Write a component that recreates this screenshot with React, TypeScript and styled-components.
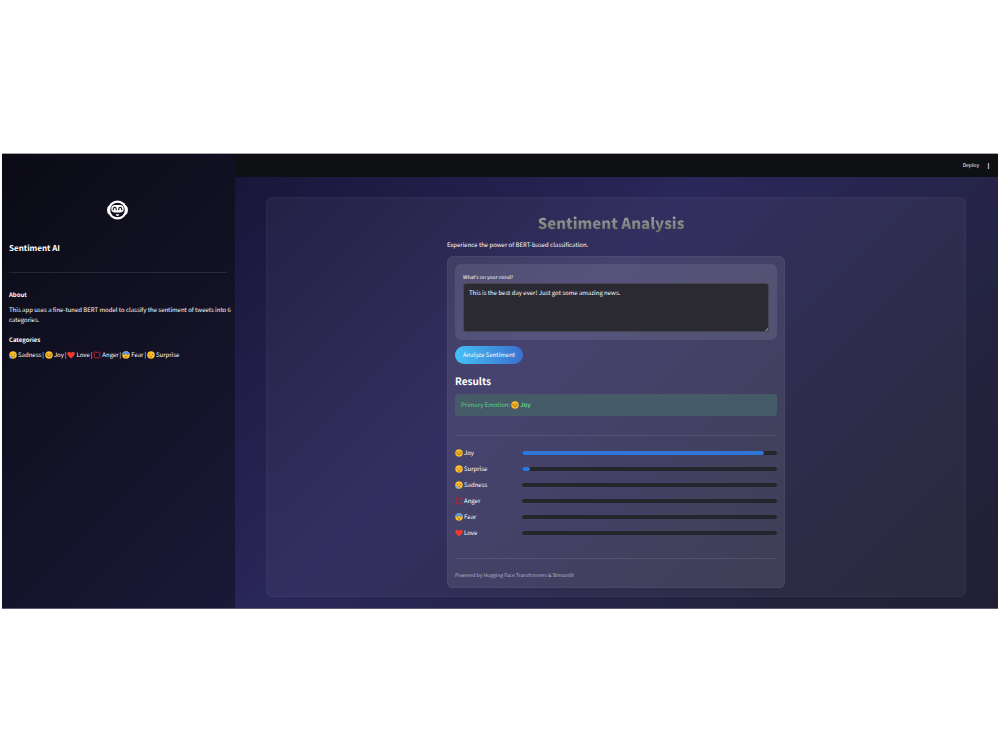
import React from 'react';
import styled, { createGlobalStyle } from 'styled-components';

const GlobalStyle = createGlobalStyle`
  * { box-sizing: border-box; }
  body {
    margin: 0;
    background: #fff;
    color: #fff;
    font-family: "Noto Sans CJK JP", "Noto Sans", sans-serif;
    font-size: 6px;
    line-height: 10px;
    font-weight: 400;
    text-rendering: geometricPrecision;
  }
  h1, h2, h3, p, hr { margin: 0; }
  button, textarea { text-rendering: inherit; }
`;

const Page = styled.div`
  min-height: 100vh;
  padding: 153px 2px 0;
`;

const Shell = styled.div`
  display: flex;
  border-top: 1px solid #a5a5ab;
  border-bottom: 1px solid #5c5a70;
  background: linear-gradient(135deg, #0f0d28, #2a275a 50%, #232340 80%, #212033);
`;

const Sidebar = styled.aside`
  flex: 0 0 233px;
  padding: 46px 8px 0 7px;
  background: linear-gradient(135deg, #0b0b16, #131225 50%, #1b1838);
`;

const LogoRow = styled.div`
  display: flex;
  justify-content: center;
  height: 20px;
  margin: 0 2px 22px 0;
`;

const SidebarTitle = styled.h2`
  font-size: 8px;
  line-height: 14px;
  font-weight: 700;
`;

const SidebarHeading = styled.h3`
  font-size: 6px;
  line-height: 10px;
  font-weight: 700;
  margin-bottom: 5px;
`;

const SidebarText = styled.p`
  margin: 0 -6px 10px 0;
`;

const Rule = styled.hr<{ $before: number; $after: number }>`
  border: 0;
  height: 1px;
  background: rgba(255, 255, 255, 0.1);
  margin: ${p => p.$before}px 0 ${p => p.$after}px;
`;

const Categories = styled.p`
  display: flex;
  align-items: center;
  gap: 1px;
`;

const Main = styled.main`
  flex: 1;
  min-width: 0;
`;

const TopBar = styled.header`
  display: flex;
  justify-content: flex-end;
  align-items: center;
  gap: 7px;
  height: 23px;
  padding-right: 7px;
  background: #0f1014;
`;

const BarButton = styled.button`
  display: flex;
  padding: 0;
  border: 0;
  background: none;
  color: inherit;
  font: inherit;
  font-size: 5px;
`;

const Panel = styled.section`
  margin: 20px 32px 11px 31px;
  padding: 16px 16px 8px;
  border: 1px solid rgba(255, 255, 255, 0.04);
  border-radius: 7px;
  background: rgba(255, 255, 255, 0.045);
`;

const Column = styled.div`
  max-width: 338px;
  margin: 0 auto;
`;

const Title = styled.h1`
  padding-right: 10px;
  font-size: 15px;
  line-height: 20px;
  font-weight: 900;
  text-align: center;
  color: transparent;
  background: linear-gradient(#a8a8a4, #666664);
  background-clip: text;
  -webkit-background-clip: text;
`;

const Subtitle = styled.p`
  margin: 6px 0;
`;

const Card = styled.div`
  padding: 7px 7px 6px;
  border: 1px solid rgba(255, 255, 255, 0.04);
  border-radius: 6px;
  background: rgba(255, 255, 255, 0.095);
`;

const InputBox = styled.div`
  padding: 8px;
  border-radius: 6px;
  background: rgba(255, 255, 255, 0.09);
`;

const Label = styled.label`
  display: block;
  padding-top: 1px;
  font-size: 5px;
`;

const TextArea = styled.textarea`
  display: block;
  width: 100%;
  height: 49px;
  padding: 4px 5px;
  border: 1px solid #45444f;
  border-radius: 3px;
  background: linear-gradient(135deg, transparent 50%, #77777f 50%) right bottom / 3px 3px no-repeat #2b2a33;
  color: inherit;
  font: inherit;
  resize: none;
  outline: 0;
`;

const AnalyzeButton = styled.button`
  display: block;
  height: 18px;
  margin: 6px 0 10px;
  padding: 0 8px;
  border: 0;
  border-radius: 9px;
  background: linear-gradient(90deg, #45c0f5, #3a70d0);
  color: #fff;
  font: inherit;
`;

const ResultsTitle = styled.h2`
  font-size: 10px;
  line-height: 14px;
  font-weight: 700;
`;

const Alert = styled.div`
  display: flex;
  align-items: center;
  gap: 1px;
  height: 22px;
  margin-top: 6px;
  padding: 0 6px;
  border-radius: 3px;
  background: #455b68;
  color: #5fd38a;
`;

const ScoreRow = styled.div`
  display: flex;
  align-items: center;
  height: 16px;
`;

const ScoreName = styled.div`
  display: flex;
  align-items: center;
  gap: 1px;
  flex: 0 0 67px;
`;

const Track = styled.div`
  flex: 1;
  height: 4px;
  border-radius: 2px;
  background: #25252d;
  overflow: hidden;
`;

const Fill = styled.div`
  height: 100%;
  border-radius: 2px;
  background: #2f76d8;
`;

const Footer = styled.p`
  font-size: 5px;
  font-weight: 400;
  color: #b8b6c6;
`;

type Mood = 'sadness' | 'joy' | 'love' | 'anger' | 'fear' | 'surprise';

const Emoji = ({ mood }: { mood: Mood }) => {
  if (mood === 'love') {
    return (
      <svg width="8" height="8" viewBox="0 0 16 16" aria-hidden="true">
        <path d="M8 15C3 11 .5 8.500.5 5.200.5 1 5.800 0 8 3.800 10.200 0 15.500 1 15.500 5.200 15.500 8.500 13 11 8 15Z" fill="#f03a2e" />
      </svg>
    );
  }
  if (mood === 'anger') {
    return (
      <svg width="8" height="8" viewBox="0 0 16 16" aria-hidden="true" fill="none" stroke="#c4202a" strokeWidth="1.700">
        <path d="M2 6V4Q2 2 4 2H6L8 3.500 10 2H12Q14 2 14 4V6L12.500 8 14 10V12Q14 14 12 14H10L8 12.500 6 14H4Q2 14 2 12V10L3.500 8Z" />
      </svg>
    );
  }
  return (
    <svg width="8" height="8" viewBox="0 0 16 16" aria-hidden="true">
      <circle cx="8" cy="8" r="7.500" fill="#fbbd2c" />
      {mood === 'fear' && <path d="M.5 8A7.500 7.500 0 0 1 15.500 8Q8 4 .5 8Z" fill="#5799e8" />}
      {mood === 'joy' ? (
        <g fill="none" stroke="#74451a" strokeWidth="1.300" strokeLinecap="round">
          <path d="M3.500 6.500Q5 4.500 6.500 6.500M9.500 6.500Q11 4.500 12.500 6.500M4 9.500Q8 14 12 9.500" />
        </g>
      ) : (
        <g fill="#74451a">
          <ellipse cx="5" cy="7" rx="1" ry="1.200" />
          <ellipse cx="11" cy="7" rx="1" ry="1.200" />
          {mood === 'sadness'
            ? <path d="M5 12.500Q8 9 11 12.500" fill="none" stroke="#74451a" strokeWidth="1.200" />
            : <ellipse cx="8" cy="11.500" rx="1.400" ry="1.300" />}
        </g>
      )}
      {mood === 'sadness' && <path d="M3 9Q.5 12 1.500 14 3.500 16 5 13.500 5 11.500 3 9Z" fill="#62b4ef" />}
    </svg>
  );
};

const RobotLogo = () => (
  <svg width="21" height="20" viewBox="0 0 42 40" role="img" aria-label="Sentiment AI">
    <path d="M4 11Q0 13 0 20T4 29H38Q42 27 42 20T38 11Z" fill="#fff" />
    <circle cx="21" cy="20" r="19" fill="#fff" />
    <circle cx="21" cy="20" r="14.500" fill="#11101f" />
    <rect x="8.500" y="10" width="25" height="15" rx="7.500" fill="#fff" />
    <path d="M12.500 19.500Q12.500 14.500 15.500 14.500T18.500 19.500M23.500 19.500Q23.500 14.500 26.500 14.500T29.500 19.500" fill="none" stroke="#11101f" strokeWidth="2.200" strokeLinecap="round" />
    <path d="M17.500 28.500H24.500Q24 32 21 32T17.500 28.500Z" fill="#fff" />
  </svg>
);

const categories: { mood: Mood; name: string }[] = [
  { mood: 'sadness', name: 'Sadness' },
  { mood: 'joy', name: 'Joy' },
  { mood: 'love', name: 'Love' },
  { mood: 'anger', name: 'Anger' },
  { mood: 'fear', name: 'Fear' },
  { mood: 'surprise', name: 'Surprise' },
];

const scores: { mood: Mood; name: string; value: number }[] = [
  { mood: 'joy', name: 'Joy', value: 95 },
  { mood: 'surprise', name: 'Surprise', value: 3 },
  { mood: 'sadness', name: 'Sadness', value: 0 },
  { mood: 'anger', name: 'Anger', value: 0 },
  { mood: 'fear', name: 'Fear', value: 0 },
  { mood: 'love', name: 'Love', value: 0 },
];

export default function App() {
  return (
    <Page>
      <GlobalStyle />
      <Shell>
        <Sidebar>
          <LogoRow><RobotLogo /></LogoRow>
          <SidebarTitle>Sentiment AI</SidebarTitle>
          <Rule $before={16} $after={17} />
          <SidebarHeading>About</SidebarHeading>
          <SidebarText>
            This app uses a fine-tuned BERT model to classify the sentiment of tweets into 6 categories.
          </SidebarText>
          <SidebarHeading>Categories</SidebarHeading>
          <Categories>
            {categories.map((c, i) => (
              <React.Fragment key={c.mood}>
                <Emoji mood={c.mood} />
                <span>{c.name}</span>
                {i < categories.length - 1 && <span>|</span>}
              </React.Fragment>
            ))}
          </Categories>
        </Sidebar>
        <Main>
          <TopBar>
            <BarButton type="button">Deploy</BarButton>
            <BarButton type="button" aria-label="Menu">
              <svg width="5" height="6" viewBox="0 0 5 6" fill="#fafafa">
                <circle cx="2.500" cy="1" r=".8" />
                <circle cx="2.500" cy="3" r=".8" />
                <circle cx="2.500" cy="5" r=".8" />
              </svg>
            </BarButton>
          </TopBar>
          <Panel>
            <Column>
              <Title>Sentiment Analysis</Title>
              <Subtitle>Experience the power of BERT-based classification.</Subtitle>
              <Card>
                <InputBox>
                  <Label htmlFor="mind">What's on your mind?</Label>
                  <TextArea id="mind" defaultValue="This is the best day ever! Just got some amazing news." />
                </InputBox>
                <AnalyzeButton type="button">Analyze Sentiment</AnalyzeButton>
                <ResultsTitle>Results</ResultsTitle>
                <Alert role="status">
                  <span>Primary Emotion:</span>
                  <Emoji mood="joy" />
                  <strong>Joy</strong>
                </Alert>
                <Rule $before={19} $after={9} />
                {scores.map(s => (
                  <ScoreRow key={s.mood}>
                    <ScoreName><Emoji mood={s.mood} />{s.name}</ScoreName>
                    <Track role="progressbar" aria-label={s.name} aria-valuenow={s.value}>
                      <Fill style={{ width: `${s.value}%` }} />
                    </Track>
                  </ScoreRow>
                ))}
                <Rule $before={17} $after={12} />
                <Footer>Powered by Hugging Face Transformers &amp; Streamlit</Footer>
              </Card>
            </Column>
          </Panel>
        </Main>
      </Shell>
    </Page>
  );
}
